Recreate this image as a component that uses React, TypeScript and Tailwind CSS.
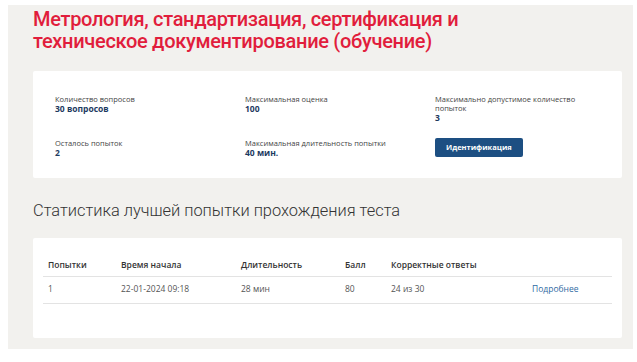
export default function App() {
  const info = [
    { label: "Количество вопросов", value: "30 вопросов" },
    { label: "Максимальная оценка", value: "100" },
    { label: "Максимально допустимое количество попыток", value: "3" },
    { label: "Осталось попыток", value: "2" },
    { label: "Максимальная длительность попытки", value: "40 мин." },
  ]

  const cols = [
    { title: "Попытки", w: "w-[73px]" },
    { title: "Время начала", w: "w-[120px]" },
    { title: "Длительность", w: "w-[104px]" },
    { title: "Балл", w: "w-[46px]" },
    { title: "Корректные ответы", w: "w-[141px]" },
    { title: "", w: "" },
  ]
  const row = ["1", "22-01-2024 09:18", "28 мин", "80", "24 из 30"]

  return (
    <div className="w-[637px] h-[362px] bg-white pt-[5px] pl-[8px] font-['Open_Sans',sans-serif]">
      <div className="w-[625px] h-[344px] bg-[#f2f1ee] pl-[25px] pr-[11px] pt-[3px]">
        <h1 className="font-['Roboto',sans-serif] font-medium text-[20px] leading-[22px] text-[#e11d3c] tracking-[-0.3px]">
          Метрология, стандартизация, сертификация и
          <br />
          техническое документирование (обучение)
        </h1>

        {/* Info card */}
        <div className="mt-[19px] bg-white rounded-[2px] h-[107px] pt-[24px] pl-[22px]">
          <div className="grid grid-cols-[190px_190px_145px] gap-y-[16px] items-start">
            {info.map((it, i) => (
              <div key={i}>
                <div className="text-[7.5px] leading-[9px] text-[#444]">{it.label}</div>
                <div className="text-[8.5px] leading-[10px] font-bold text-[#1d3a5f]">{it.value}</div>
              </div>
            ))}
            <div className="flex -mt-[1px]">
              <button className="flex items-center h-[19px] px-[11px] rounded-[2px] bg-[#1d4f82] text-white text-[7.5px] font-bold">
                Идентификация
              </button>
            </div>
          </div>
        </div>

        <h2 className="mt-[22px] font-['Roboto',sans-serif] font-light text-[16.4px] leading-[22px] text-[#333]">
          Статистика лучшей попытки прохождения теста
        </h2>

        {/* Stats card */}
        <div className="mt-[16px] bg-white rounded-[2px] h-[100px] pt-[18px] px-[10px]">
          <table className="w-full text-[8.5px] border-collapse">
            <thead>
              <tr className="border-b border-[#e3e3e3]">
                {cols.map((c, i) => (
                  <th key={i} className={`${c.w} h-[20px] px-[5px] text-left font-semibold text-[#333]`}>
                    {c.title}
                  </th>
                ))}
              </tr>
            </thead>
            <tbody>
              <tr className="border-b border-[#e3e3e3]">
                {row.map((v, i) => (
                  <td key={i} className="h-[27px] px-[5px] text-[#555]">
                    {v}
                  </td>
                ))}
                <td className="h-[27px] px-[5px] text-[#2f6aa3]">Подробнее</td>
              </tr>
            </tbody>
          </table>
        </div>
      </div>
    </div>
  )
}
